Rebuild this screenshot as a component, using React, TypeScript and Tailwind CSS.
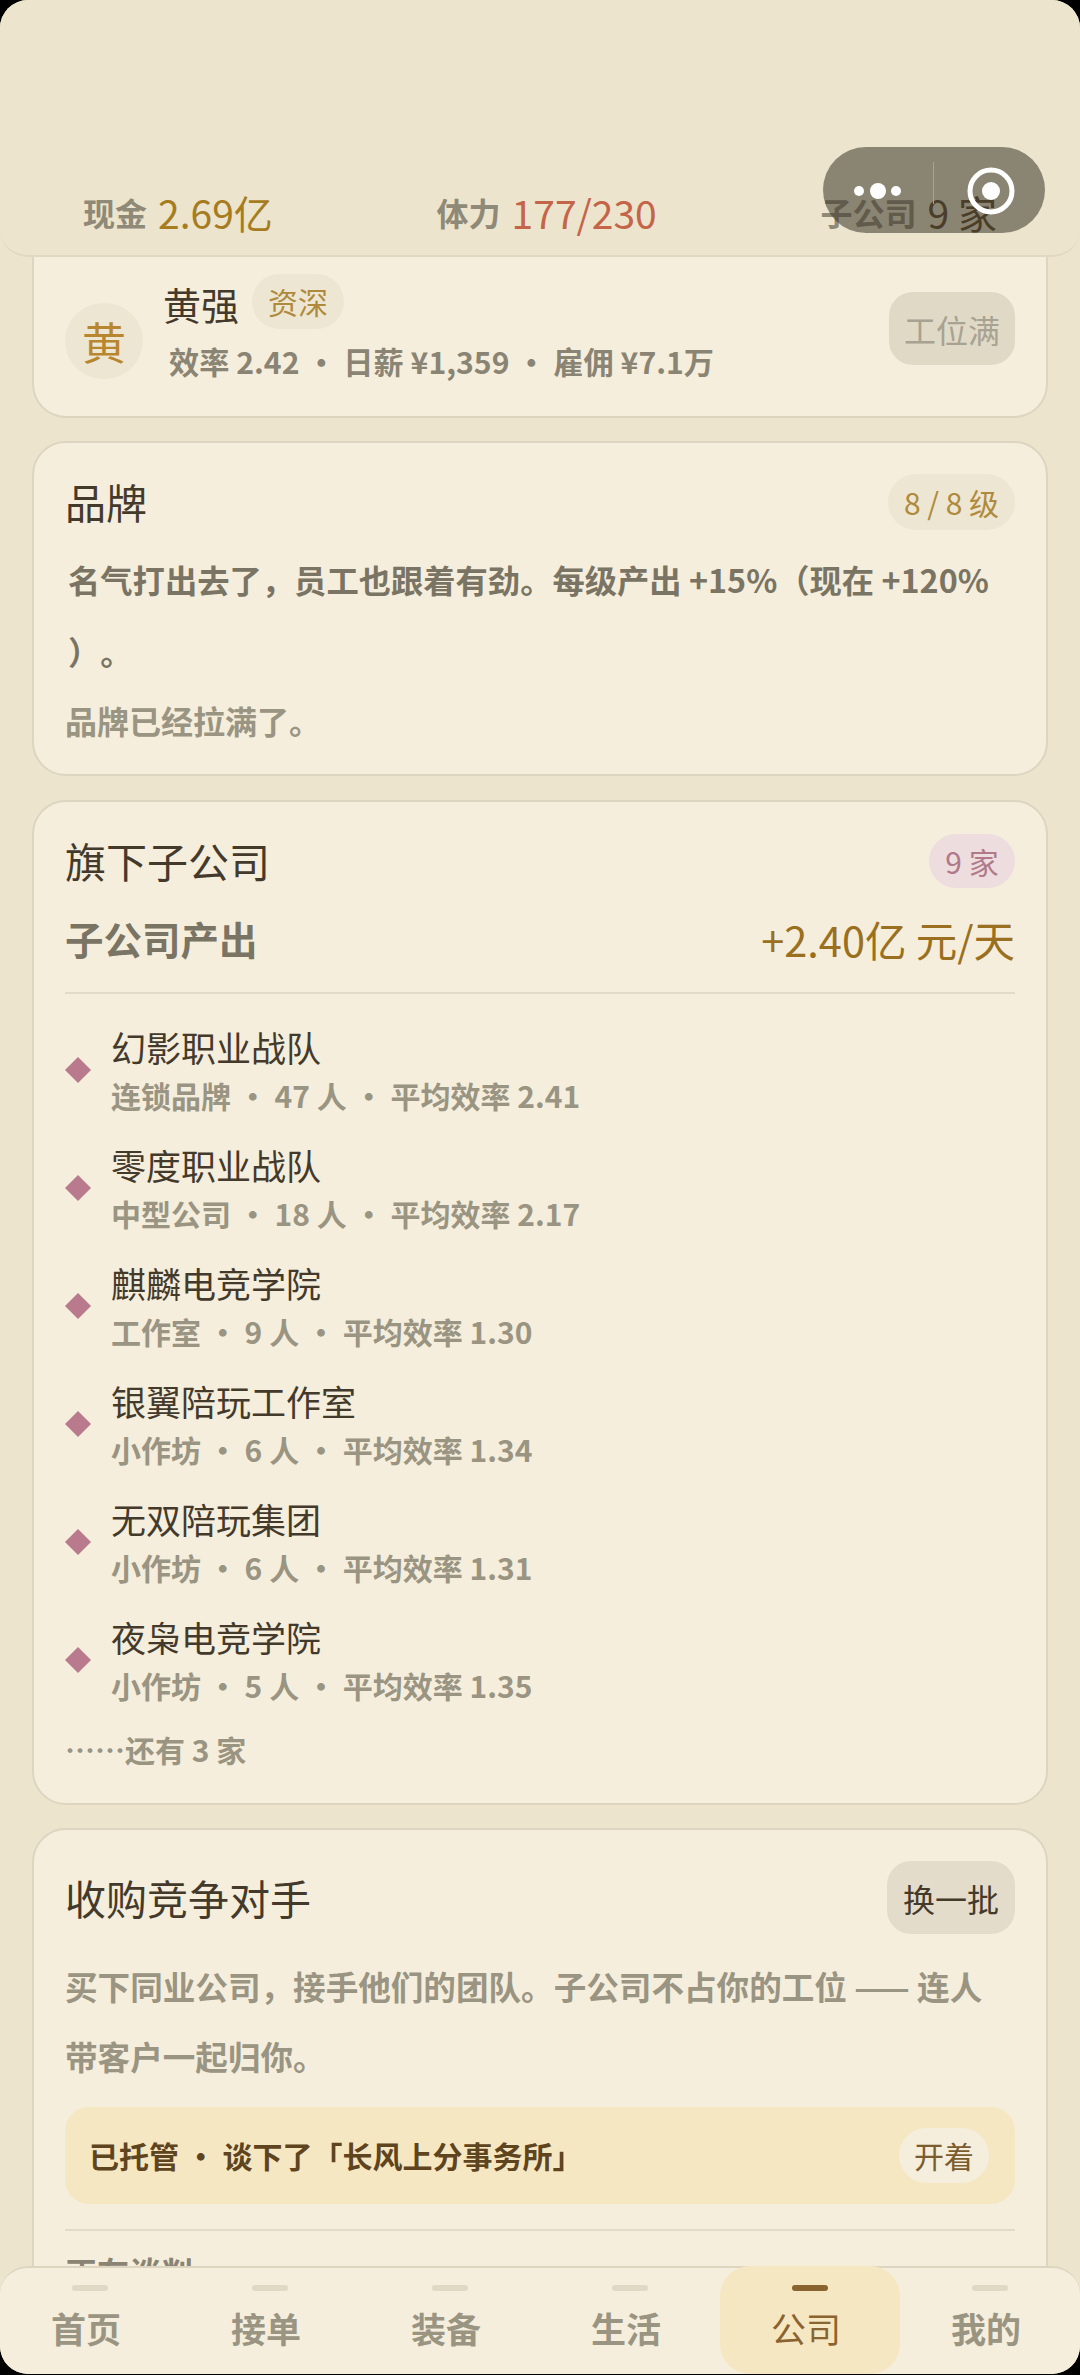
import React from 'react';

const cardClass = 'bg-[#f5eedc] border-2 border-[#ddd5c0] rounded-[34px] px-[31px] shrink-0';
const subsidiaries = [
  { name: '幻影职业战队', meta: '连锁品牌 ・ 47 人 ・ 平均效率 2.41' },
  { name: '零度职业战队', meta: '中型公司 ・ 18 人 ・ 平均效率 2.17' },
  { name: '麒麟电竞学院', meta: '工作室 ・ 9 人 ・ 平均效率 1.30' },
  { name: '银翼陪玩工作室', meta: '小作坊 ・ 6 人 ・ 平均效率 1.34' },
  { name: '无双陪玩集团', meta: '小作坊 ・ 6 人 ・ 平均效率 1.31' },
  { name: '夜枭电竞学院', meta: '小作坊 ・ 5 人 ・ 平均效率 1.35' },
];
const tabs = ['首页', '接单', '装备', '生活', '公司', '我的'];

const Header = () => (
  <div className="relative z-10 h-[257px] shrink-0 bg-[#ece4cd] border-b-2 border-[#e0d8c2] rounded-b-[28px] px-[83px] pt-[185px] flex justify-between items-start">
    <div className="flex items-center gap-[11px] h-[54px]">
      <span className="text-[32px] font-semibold text-[#8f8977]">现金</span>
      <span className="text-[39px] text-[#a67c1e]">2.69亿</span>
    </div>
    <div className="flex items-center gap-[11px] h-[54px]">
      <span className="text-[32px] font-semibold text-[#8f8977]">体力</span>
      <span className="text-[39px] text-[#c4654a]">177/230</span>
    </div>
    <div className="flex items-center gap-[11px] h-[54px]">
      <span className="text-[32px] font-semibold text-[#8f8977]">子公司</span>
      <span className="text-[39px] text-[#5e4a2c]">9 家</span>
    </div>
    {/* host capsule, sits over the status row */}
    <div className="absolute left-[823px] top-[147px] w-[222px] h-[86px] rounded-full bg-[#3a3528]/55">
      <svg width="222" height="86" viewBox="0 0 222 86" className="block">
        <circle cx="36" cy="44" r="5" fill="#fff" />
        <circle cx="55" cy="44" r="8" fill="#fff" />
        <circle cx="73" cy="44" r="5" fill="#fff" />
        <rect x="110" y="15" width="1" height="42" fill="#a8a396" />
        <circle cx="168" cy="44" r="21" fill="none" stroke="#fff" strokeWidth="5" />
        <circle cx="168" cy="44" r="9" fill="#fff" />
      </svg>
    </div>
  </div>
);

const RecruitCard = () => (
  <div className={`${cardClass} border-t-0 rounded-t-none h-[162px] flex items-center justify-between -mt-[1px] -mb-[1px]`}>
    <div className="flex items-center gap-[22px] pb-[14px]">
      <div className="w-[78px] h-[76px] mt-[24px] rounded-full bg-[#ede6d2] flex items-center justify-center text-[44px] text-[#b8862f]">黄</div>
      <div className="-ml-[2px]">
        <div className="flex items-center gap-[13px] h-[55px]">
          <span className="text-[38px] text-[#443a2c]">黄强</span>
          <span className="w-[92px] h-[55px] -mt-[3px] rounded-full bg-[#ede6d2] flex items-center justify-center text-[30px] text-[#b08a3c]">资深</span>
        </div>
        <div className="text-[30.2px] font-semibold text-[#8a8474] mt-[8px] ml-[6px] leading-[44px]">效率 2.42 ・ 日薪 ¥1,359 ・ 雇佣 ¥7.1万</div>
      </div>
    </div>
    <button className="w-[126px] h-[73px] rounded-[24px] bg-[#e0d9c6] text-[32px] text-[#a8a292] mb-[15px]">工位满</button>
  </div>
);

const BrandCard = () => (
  <div className={`${cardClass} h-[335px] pt-[31px]`}>
    <div className="flex items-center justify-between h-[56px]">
      <span className="text-[41px] text-[#443a2c]">品牌</span>
      <span className="w-[127px] h-[56px] rounded-full bg-[#ede6d2] flex items-center justify-center text-[30px] text-[#b08a3c]">8 / 8 级</span>
    </div>
    <p className="mt-[13px] text-[32.3px] leading-[72px] font-semibold text-[#7a7464] pl-[3px] whitespace-nowrap [text-spacing-trim:space-all]">
      名气打出去了，员工也跟着有劲。每级产出 +15%（现在 +120%
      <br />
      ）。
    </p>
    <p className="text-[32px] leading-[60px] font-semibold text-[#9a9482] mt-[3px]">品牌已经拉满了。</p>
  </div>
);

const SubsidiaryCard = () => (
  <div className={`${cardClass} h-[1005px] -mb-[1px] pt-[32px]`}>
    <div className="flex items-center justify-between h-[54px]">
      <span className="text-[41px] text-[#443a2c]">旗下子公司</span>
      <span className="w-[86px] h-[54px] rounded-full bg-[#eeddde] flex items-center justify-center text-[30px] text-[#b07a8a]">9 家</span>
    </div>
    <div className="flex items-center justify-between h-[60px] mt-[21px]">
      <span className="text-[38.5px] font-semibold text-[#7a7464]">子公司产出</span>
      <span className="text-[41.5px] text-[#9a7020]">+2.40亿 元/天</span>
    </div>
    <div className="h-[2px] bg-[#e2dbc8] mt-[23px] mb-[15px]" />
    <div className="flex flex-col">
      {subsidiaries.map((s) => (
        <div key={s.name} className="flex items-center h-[118px]">
          <svg width="26" height="26" viewBox="0 0 26 26" className="shrink-0 mr-[20px] mt-[4px]">
            <polygon points="13,0 26,13 13,26 0,13" fill="#b87a8c" />
          </svg>
          <div>
            <div className="text-[35px] leading-[53px] text-[#443a2c]">{s.name}</div>
            <div className="text-[30px] leading-[44px] font-semibold text-[#9a9482]">{s.meta}</div>
          </div>
        </div>
      ))}
    </div>
    <div className="text-[30px] leading-[44px] font-semibold text-[#9a9482] mt-[10px]">……还有 3 家</div>
  </div>
);

const AcquireCard = () => (
  <div className={`${cardClass} pt-[31px]`}>
    <div className="flex items-center justify-between h-[73px]">
      <span className="text-[41px] text-[#443a2c]">收购竞争对手</span>
      <button className="w-[128px] h-[73px] rounded-[24px] bg-[#e3dccb] text-[32px] text-[#443a2c]">换一批</button>
    </div>
    <p className="mt-[17px] text-[32.6px] leading-[70px] font-semibold text-[#9a9482] whitespace-nowrap">
      买下同业公司，接手他们的团队。子公司不占你的工位 —— 连人
      <br />
      带客户一起归你。
    </p>
    <div className="mt-[16px] h-[97px] rounded-[24px] bg-[#f6e7c3] flex items-center justify-between pl-[24px] pr-[26px]">
      <span className="text-[30px] font-bold text-[#5e4520]">已托管 ・ 谈下了「长风上分事务所」</span>
      <span className="w-[90px] h-[55px] rounded-full bg-[#f5eedc] flex items-center justify-center text-[30px] text-[#7a5c2e]">开着</span>
    </div>
    <div className="h-[2px] bg-[#e2dbc8] mt-[25px]" />
    <div className="text-[32px] font-semibold text-[#8a8474] mt-[16px]">正在谈判</div>
  </div>
);

const BottomNav = () => (
  <div className="relative z-10 h-[108px] shrink-0 bg-[#f5eedc] border-t-2 border-[#ddd5c0] rounded-t-[28px] grid grid-cols-6">
    {tabs.map((t) => {
      const active = t === '公司';
      return (
        <div key={t} className={`flex flex-col items-center pt-[19px] rounded-[30px] -mt-[2px] ${active ? 'bg-[#f6e7c3]' : ''}`}>
          <div className={`w-[36px] h-[6px] rounded-full ${active ? 'bg-[#8a6430]' : 'bg-[#e0d9c6]'}`} />
          <span className={`mt-[11px] mr-[8px] text-[35px] leading-[52px] ${active ? 'font-normal text-[#8a6430]' : 'font-semibold text-[#9a9482]'}`}>{t}</span>
        </div>
      );
    })}
  </div>
);

export default function App() {
  return (
    <div className="bg-black w-[1080px] h-[2375px] overflow-hidden">
      <div
        className="w-[1080px] h-[2374px] rounded-[28px] overflow-hidden bg-[#ece4cd] flex flex-col"
        style={{ fontFamily: '"Noto Sans CJK SC", "Noto Sans", sans-serif' }}
      >
        <Header />
        <div className="flex-1 min-h-0 overflow-hidden flex flex-col gap-[24px] px-[32px]">
          <RecruitCard />
          <BrandCard />
          <SubsidiaryCard />
          <AcquireCard />
        </div>
        <BottomNav />
      </div>
    </div>
  );
}
